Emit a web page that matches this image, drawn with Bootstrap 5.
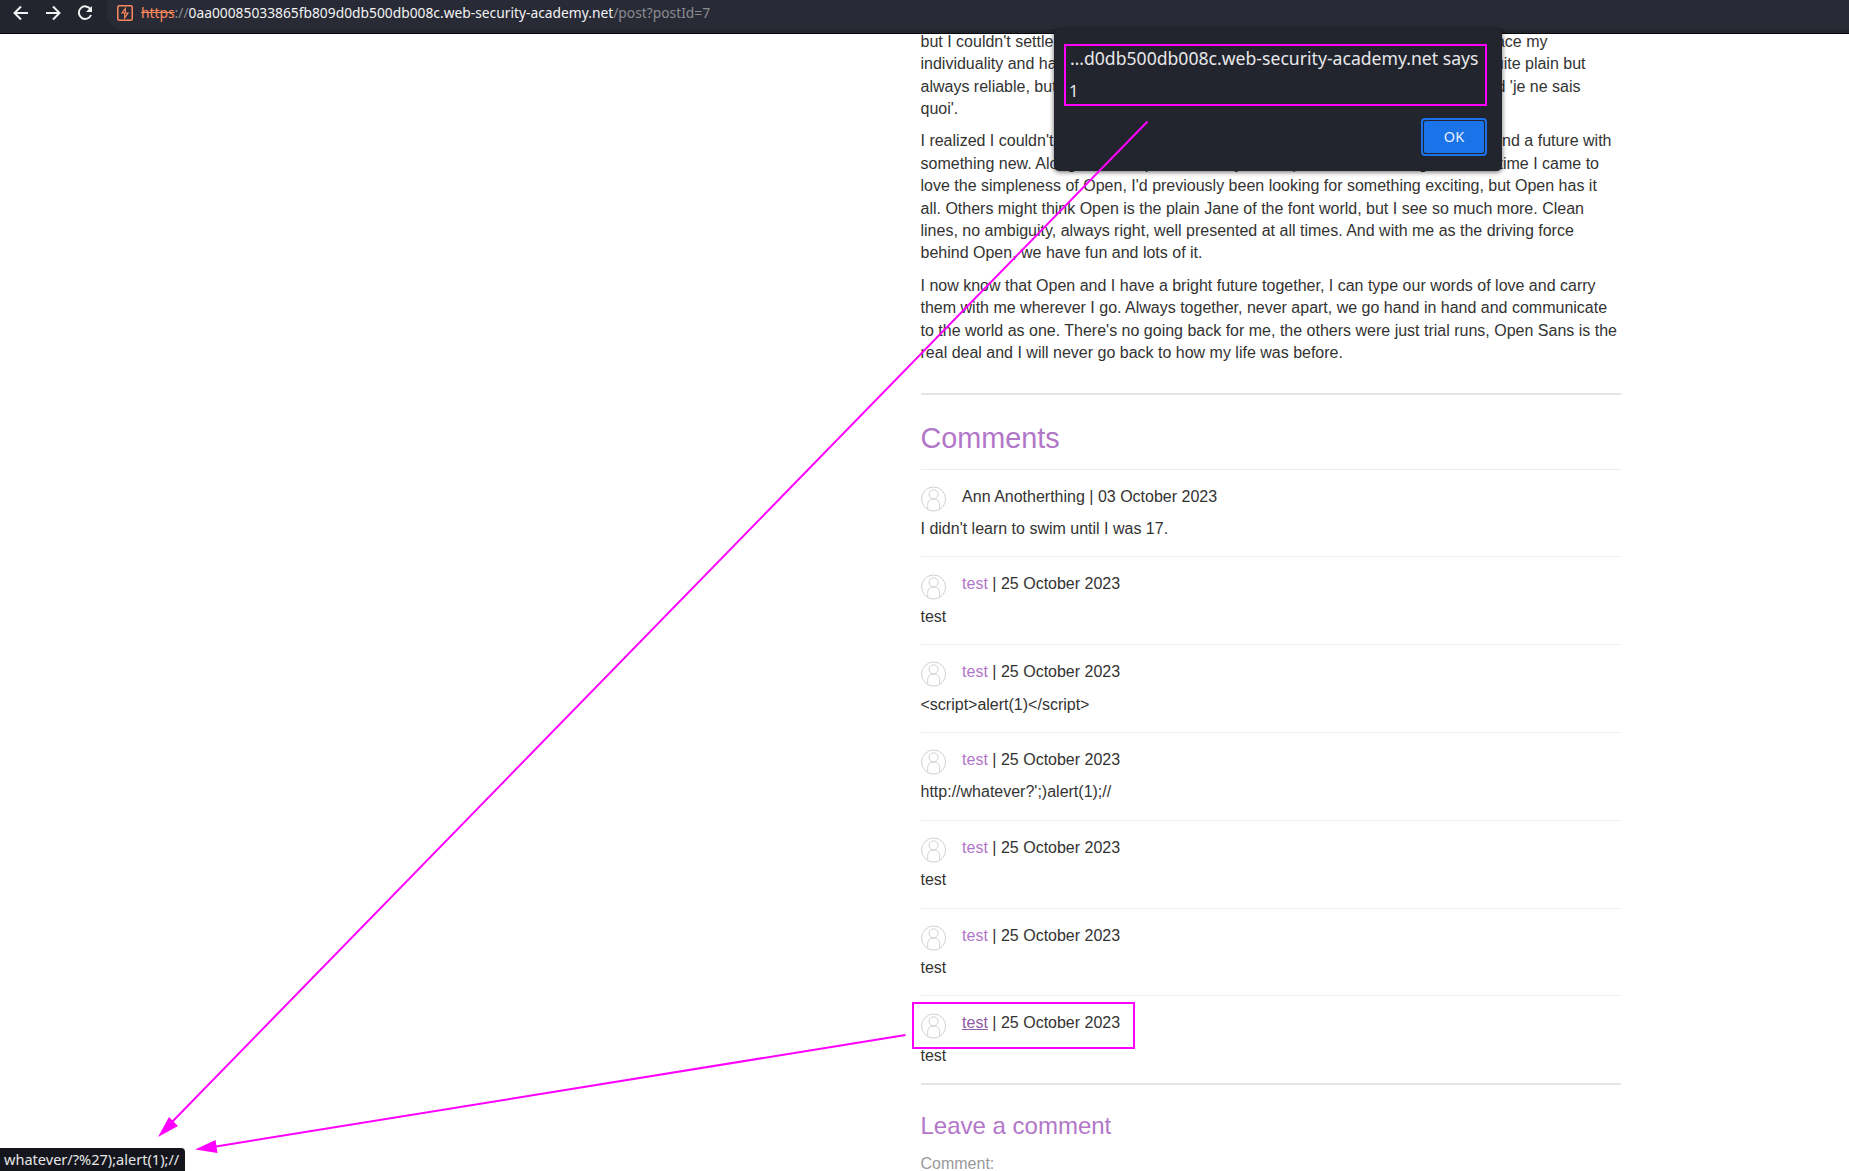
<!DOCTYPE html>
<html lang="en">
<head>
<meta charset="utf-8">
<title>Blog post</title>
<link href="https://cdn.jsdelivr.net/npm/bootstrap@5.3.0/dist/css/bootstrap.min.css" rel="stylesheet">
<script src="https://cdn.jsdelivr.net/npm/bootstrap@5.3.0/dist/js/bootstrap.bundle.min.js"></script>
<style>
html, body { height: 100%; }
body { font: 16px/22.4px "Liberation Sans", Arial, sans-serif; color: #333332; background: #fff; overflow: hidden; }
.browser-bar { height: 34px; background: #23252e; border-bottom: 1px solid #07080b; font-family: "Noto Sans", sans-serif; flex: none; }
.toolbar-icons { width: 107px; height: 33px; flex: none; }
.address { height: 29px; background: #282a35; border-radius: 0 0 0 15px; font-size: 13.8px; line-height: 25px; color: #8b8c91; white-space: pre; }
.address .scheme { color: #ff8a5c; text-decoration: line-through; }
.address .host { color: #f3f3f4; }
.address svg { width: 16px; height: 16px; margin: 5px 8px 0 10px; }
.viewport { overflow: hidden; }
.post { width: 700px; margin-left: 920.5px; margin-top: -3.2px; }
.post p { margin: 0 0 10px; white-space: nowrap; }
.post p > span { display: flex; justify-content: space-between; }
.rule { height: 2px; background: #e5e5e5; }
.post .rule-top { margin-top: 28.2px; }
.post h1 { font-size: 28.8px; line-height: 34px; color: #b277c8; margin: 0; font-weight: 400; height: 74px; padding-top: 26px; }
.post h2 { font-size: 24px; line-height: 30px; color: #b277c8; margin: 0; font-weight: 400; height: 67.6px; padding-top: 26px; }
.remark { border-top: 1px solid #ededed; height: 87.8px; padding-top: 16px; }
.remark .byline { height: 32.4px; }
.remark svg { width: 25.6px; height: 26px; margin-right: 16px; flex: none; margin-top: .1px; }
.remark a { color: #b277c8; text-decoration: none; }
.remark a.hovered { color: #8f5aa5; text-decoration: underline; }
.form-caption { color: #999; }
.alert-box { position: absolute; left: 1054px; top: 29px; width: 448px; height: 142px; background: #23252e; border-radius: 5px; box-shadow: 0 1px 5px rgba(0,0,0,.6); font-family: "Noto Sans", sans-serif; color: #e8e8ea; padding: 12px 15px 15px 16px; }
.alert-box .origin { font-size: 17.63px; line-height: 34px; white-space: nowrap; }
.alert-box .message { font-size: 16.5px; line-height: 32px; margin-left: -1px; }
.alert-box .confirm { width: 66px; height: 38px; border: 2px solid #1a73e8; border-radius: 4px; padding: 1px; background: #23252e; }
.alert-box .btn { background: #1a73e8; color: #e8f0fe; font-size: 14.5px; line-height: 18px; border: 0; border-radius: 2px; width: 100%; height: 100%; padding: 0 0 2px; }
.status-bubble { position: absolute; left: 0; bottom: 0; width: 185px; height: 23px; background: #15161d; color: #e6e6e6; border-radius: 0 4px 0 0; font: 14.55px/22px "Noto Sans", sans-serif; padding-left: 4px; white-space: nowrap; }
.annotations { position: absolute; left: 0; top: 0; width: 1849px; height: 1171px; pointer-events: none; }
</style>
</head>
<body class="d-flex flex-column position-relative">
<svg width="0" height="0" class="position-absolute"><defs>
<symbol id="avatar" viewBox="0 0 26 26"><g fill="none" stroke="#cbd0d0" stroke-width="1"><circle cx="12.8" cy="13" r="12.2"/><circle cx="12.8" cy="8.3" r="4.6"/><path d="M6.800 23.300V18.500C6.800 15 9.500 13 12.800 13S18.900 15 18.900 18.500V23.300"/></g></symbol>
</defs></svg>
<header class="browser-bar d-flex">
  <svg class="toolbar-icons" viewBox="0 0 107 33" fill="none" stroke="#f1f1f1" stroke-width="2"><path d="M28 13H15M21 6.500 14.500 13 21 19.500M46 13H59M53 6.500 59.500 13 53 19.500"/><path d="M90.500 9.300A6.300 6.300 0 1 0 91 15"/><path d="M92 6V12H86Z" fill="#f1f1f1" stroke="none"/></svg>
  <div class="address d-flex flex-grow-1"><svg viewBox="0 0 16 16" fill="none" stroke="#ff8a5c"><rect x=".8" y=".8" width="14.400" height="14.400" rx="1.500" stroke-width="1.500"/><path d="M8.300 7.500V3.500L5 8H11L7.700 12.800V8.500" stroke-width="1.200"/></svg><div class="url"><span class="scheme">https</span>://<span class="host">0aa00085033865fb809d0db500db008c.web-security-academy.net</span>/post?postId=7</div></div>
</header>
<main class="viewport flex-grow-1">
<article class="post">
<p>
<span style="width:627px"><b class="fw-normal">but I couldn't settle</b><b class="fw-normal">embrace my</b></span>
<span style="width:665px"><b class="fw-normal">individuality and had</b><b class="fw-normal">quite plain but</b></span>
<span style="width:660px"><b class="fw-normal">always reliable, but</b><b class="fw-normal">and 'je ne sais</b></span>
<span>quoi'.</span>
</p>
<p>
<span style="width:691px"><b class="fw-normal">I realized I couldn't</b><b class="fw-normal">find a future with</b></span>
<span style="width:678.5px"><b class="fw-normal">something new. Along comes Open Sans, my future partner. It was long until the</b><b class="fw-normal">time I came to</b></span>
<span>love the simpleness of Open, I'd previously been looking for something exciting, but Open has it</span>
<span>all. Others might think Open is the plain Jane of the font world, but I see so much more. Clean</span>
<span>lines, no ambiguity, always right, well presented at all times. And with me as the driving force</span>
<span>behind Open, we have fun and lots of it.</span>
</p>
<p>
<span>I now know that Open and I have a bright future together, I can type our words of love and carry</span>
<span>them with me wherever I go. Always together, never apart, we go hand in hand and communicate</span>
<span>to the world as one. There's no going back for me, the others were just trial runs, Open Sans is the</span>
<span>real deal and I will never go back to how my life was before.</span>
</p>
<div class="rule rule-top"></div>
<h1>Comments</h1>
<section class="remark"><div class="byline d-flex"><svg><use href="#avatar"/></svg><div>Ann Anotherthing | 03 October 2023</div></div><div>I didn't learn to swim until I was 17.</div></section>
<section class="remark"><div class="byline d-flex"><svg><use href="#avatar"/></svg><div><a href="#">test</a> | 25 October 2023</div></div><div>test</div></section>
<section class="remark"><div class="byline d-flex"><svg><use href="#avatar"/></svg><div><a href="#">test</a> | 25 October 2023</div></div><div>&lt;script&gt;alert(1)&lt;/script&gt;</div></section>
<section class="remark"><div class="byline d-flex"><svg><use href="#avatar"/></svg><div><a href="#">test</a> | 25 October 2023</div></div><div>http://whatever?';)alert(1);//</div></section>
<section class="remark"><div class="byline d-flex"><svg><use href="#avatar"/></svg><div><a href="#">test</a> | 25 October 2023</div></div><div>test</div></section>
<section class="remark"><div class="byline d-flex"><svg><use href="#avatar"/></svg><div><a href="#">test</a> | 25 October 2023</div></div><div>test</div></section>
<section class="remark"><div class="byline d-flex"><svg><use href="#avatar"/></svg><div><a href="#" class="hovered">test</a> | 25 October 2023</div></div><div>test</div></section>
<div class="rule"></div>
<h2>Leave a comment</h2>
<div class="form-caption">Comment:</div>
</article>
</main>
<div class="alert-box d-flex flex-column">
  <div class="origin">…d0db500db008c.web-security-academy.net says</div>
  <div class="message">1</div>
  <div class="confirm mt-auto ms-auto"><button class="btn d-block">OK</button></div>
</div>
<div class="status-bubble">whatever/?%27);alert(1);//</div>
<svg class="annotations" viewBox="0 0 1849 1171" fill="none" stroke="#f0f" stroke-width="2"><rect x="1065" y="45" width="421" height="60"/><rect x="913" y="1003" width="221" height="45"/><path d="M1147.500 121.500 172 1122M905.500 1035 216 1146.500"/><path d="M158 1137 169 1117 178 1126ZM195 1149.500 215.500 1140 217.500 1153Z" fill="#f0f" stroke="none"/></svg>
</body>
</html>
